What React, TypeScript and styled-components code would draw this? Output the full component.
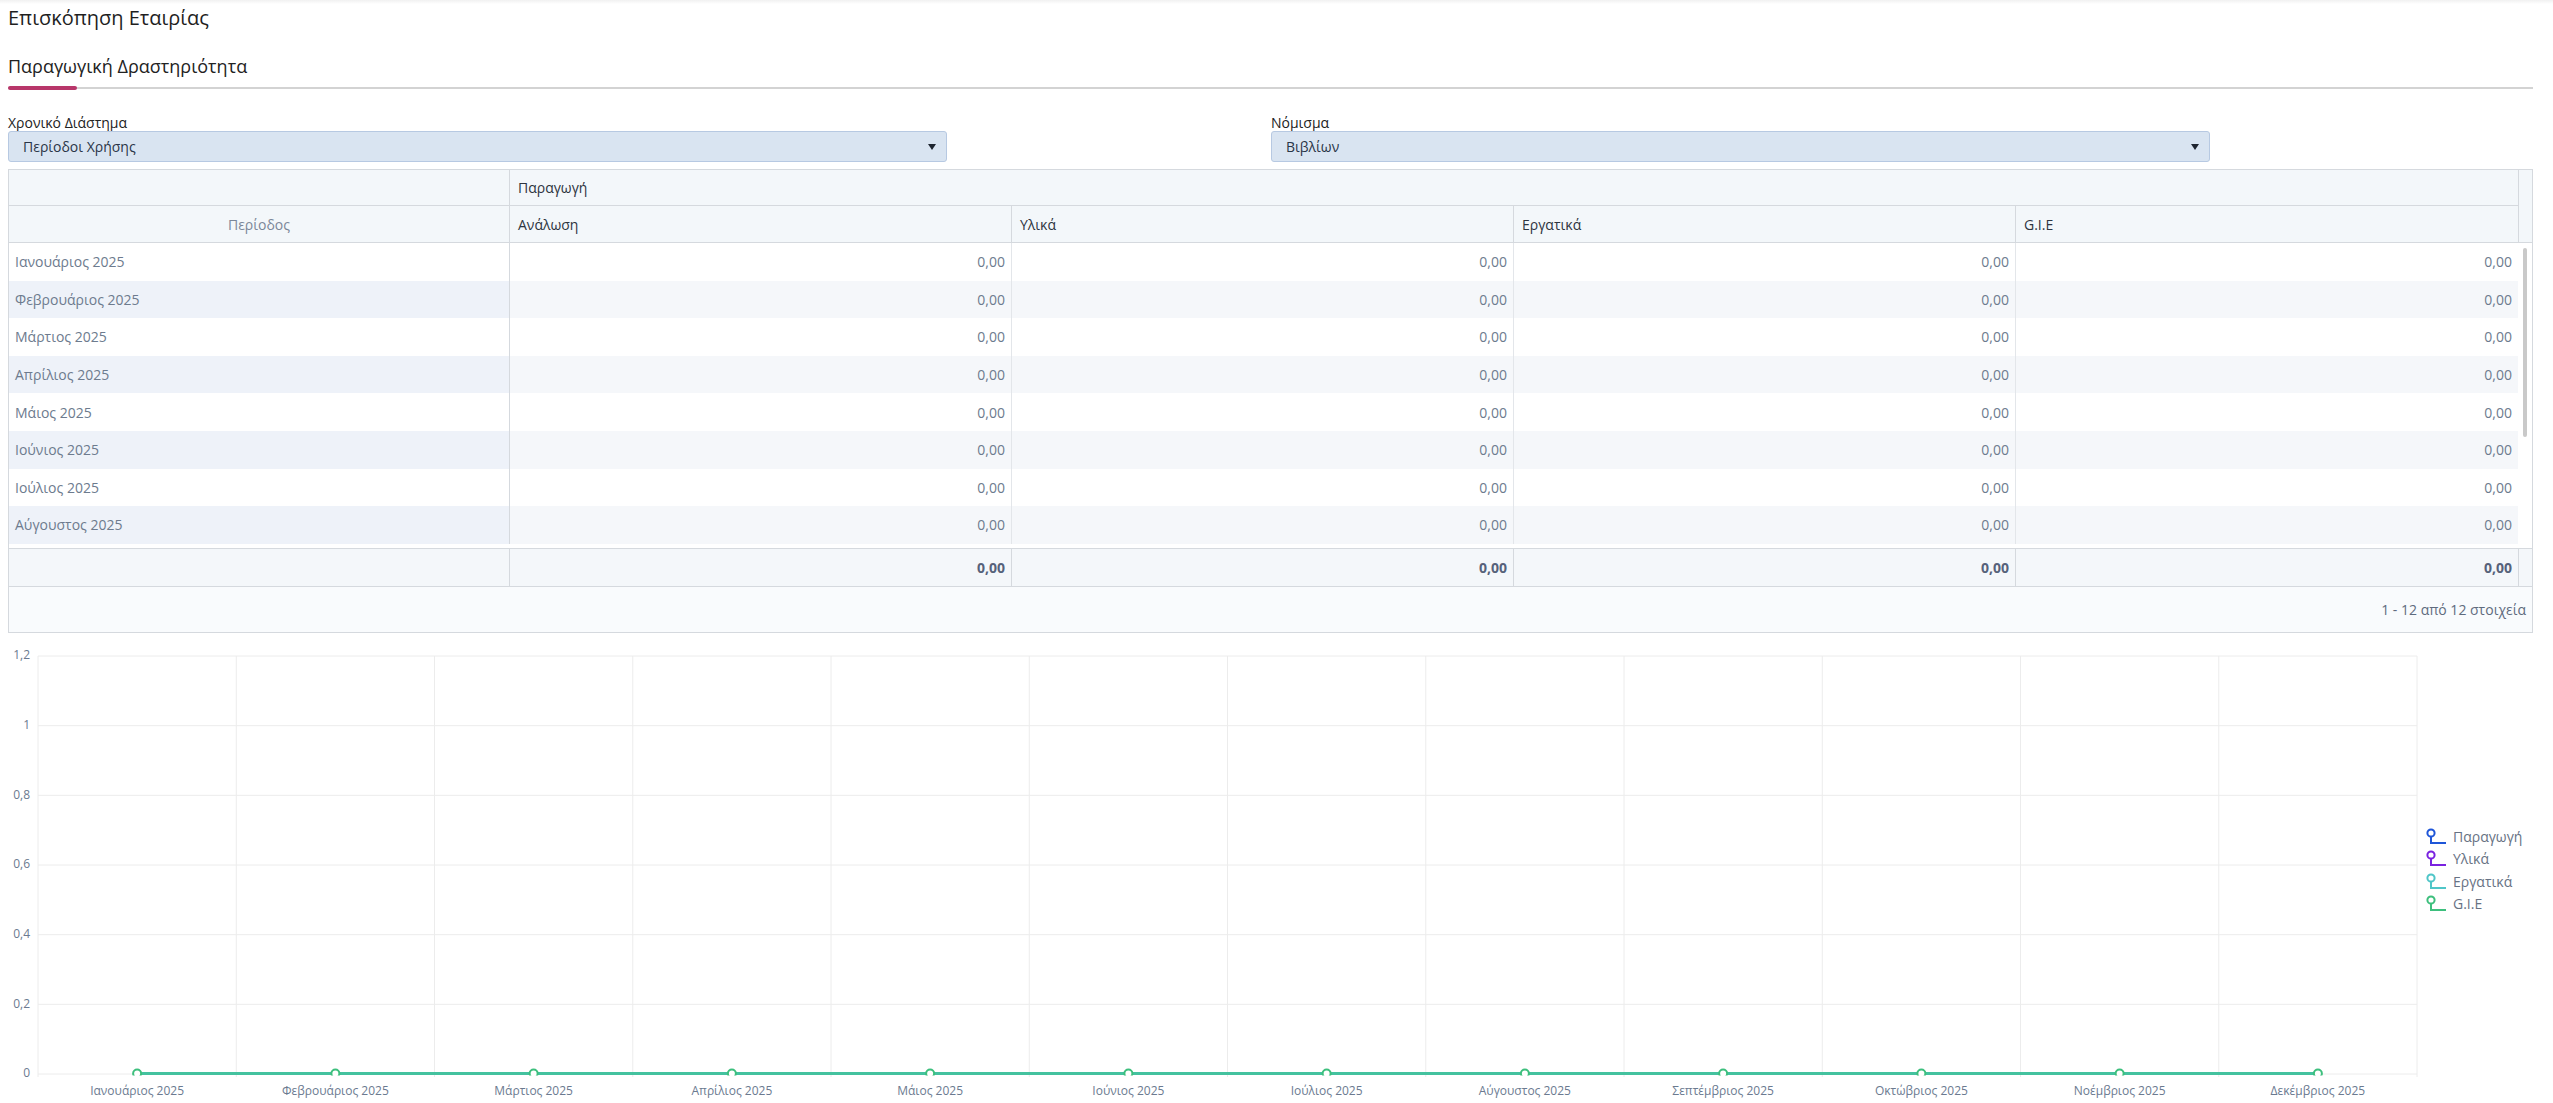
import React from "react";
import styled, { createGlobalStyle } from "styled-components";

const GlobalStyle = createGlobalStyle`
  html, body { margin: 0; padding: 0; background: #fff; }
  body { font-family: "Open Sans", "Noto Sans", "DejaVu Sans", sans-serif; color: #222; }
  * { box-sizing: border-box; }
`;

const months = [
  "Ιανουάριος 2025",
  "Φεβρουάριος 2025",
  "Μάρτιος 2025",
  "Απρίλιος 2025",
  "Μάιος 2025",
  "Ιούνιος 2025",
  "Ιούλιος 2025",
  "Αύγουστος 2025",
  "Σεπτέμβριος 2025",
  "Οκτώβριος 2025",
  "Νοέμβριος 2025",
  "Δεκέμβριος 2025",
];

const visibleRows = months.slice(0, 8);

const series = [
  { name: "Παραγωγή", color: "#1f56d8" },
  { name: "Υλικά", color: "#7a22e0" },
  { name: "Εργατικά", color: "#4fc6c8" },
  { name: "G.I.E", color: "#3dbf7d" },
];

const Page = styled.div`
  padding: 0 20px 0 8px;
  min-height: 1103px;
`;

const TopShade = styled.div`
  height: 4px;
  margin: 0 -20px 0 -8px;
  background: linear-gradient(#f1f1f1, #ffffff);
`;

const Title = styled.h1`
  margin: 0;
  font-size: 20px;
  line-height: 28px;
  font-weight: 400;
  color: #1f1f1f;
`;

const TabBar = styled.div`
  margin-top: 22px;
  border-bottom: 2px solid #d3d3d3;
  display: flex;
`;

const Tab = styled.div`
  position: relative;
  font-size: 18px;
  line-height: 24px;
  padding-bottom: 9px;
  color: #222;
`;

const TabIndicator = styled.span`
  position: absolute;
  left: 0;
  bottom: -3px;
  width: 69px;
  height: 4px;
  border-radius: 2px;
  background: #b8366a;
`;

const Filters = styled.div`
  margin-top: 25px;
  display: grid;
  grid-template-columns: 1263px 1263px;
`;

const Field = styled.div`
  display: flex;
  flex-direction: column;
`;

const Label = styled.label`
  font-size: 14px;
  line-height: 17px;
  color: #222;
`;

const Select = styled.div`
  width: 939px;
  height: 31px;
  display: flex;
  align-items: center;
  justify-content: space-between;
  padding: 0 10px 0 14px;
  background: #d9e4f1;
  border: 1px solid #b7c9e2;
  border-radius: 3px;
  font-size: 14px;
  color: #2a3547;
`;

const Caret = styled.span`
  width: 0;
  height: 0;
  border-left: 4px solid transparent;
  border-right: 4px solid transparent;
  border-top: 6px solid #1e2530;
`;

const Grid = styled.div`
  margin-top: 7px;
  border: 1px solid #d5d9de;
  font-size: 14px;
`;

const cols = "501px repeat(4, 1fr)";

const HeaderGrid = styled.div`
  display: grid;
  grid-template-columns: ${cols} 14px;
  grid-template-rows: 36px 36px;
  background: #f3f7fa;
  border-bottom: 1px solid #d5d9de;
`;

const HeadCell = styled.div<{ $center?: boolean; $muted?: boolean; $right?: boolean; $bottom?: boolean }>`
  display: flex;
  align-items: center;
  justify-content: ${(p) => (p.$center ? "center" : "flex-start")};
  padding: 0 8px;
  color: ${(p) => (p.$muted ? "#7b8799" : "#2d3440")};
  border-right: ${(p) => (p.$right ? "1px solid #d5d9de" : "none")};
  border-bottom: ${(p) => (p.$bottom ? "1px solid #d5d9de" : "none")};
`;

const Gutter = styled.div`
  grid-column: 6;
  grid-row: 1 / 3;
  border-left: 1px solid #d5d9de;
`;

const Body = styled.div`
  height: 305px;
  display: grid;
  grid-template-columns: 1fr 14px;
  background: #fff;
`;

const Rows = styled.div`
  overflow: hidden;
`;

const ScrollTrack = styled.div`
  padding: 5px;
  background: #fff;
`;

const ScrollThumb = styled.div`
  width: 4px;
  height: 189px;
  border-radius: 2px;
  background: #c9c9c9;
`;

const Row = styled.div`
  display: grid;
  grid-template-columns: ${cols};
  height: 37.6px;
`;

const PeriodCell = styled.div<{ $alt: boolean }>`
  display: flex;
  align-items: center;
  padding: 0 6px;
  color: #6d7b8e;
  background: ${(p) => (p.$alt ? "#eef2f9" : "#fff")};
  border-right: 1px solid #d5d9de;
`;

const NumCell = styled.div<{ $alt: boolean; $last?: boolean }>`
  display: flex;
  align-items: center;
  justify-content: flex-end;
  padding: 0 6px;
  color: #6d7b8e;
  background: ${(p) => (p.$alt ? "#f5f7fa" : "#fff")};
  border-right: ${(p) => (p.$last ? "none" : "1px solid #e3e6ea")};
`;

const Footer = styled.div`
  display: grid;
  grid-template-columns: ${cols} 14px;
  height: 39px;
  background: #f4f7fa;
  border-top: 1px solid #d5d9de;
  border-bottom: 1px solid #d5d9de;
`;

const FootCell = styled.div<{ $border?: "right" | "left" | "none" }>`
  display: flex;
  align-items: center;
  justify-content: flex-end;
  padding: 0 6px;
  font-weight: 700;
  color: #56627a;
  border-right: ${(p) => (p.$border === "right" ? "1px solid #d5d9de" : "none")};
  border-left: ${(p) => (p.$border === "left" ? "1px solid #d5d9de" : "none")};
`;

const Pager = styled.div`
  height: 45px;
  display: flex;
  align-items: center;
  justify-content: flex-end;
  padding-right: 6px;
  background: #f9fbfd;
  color: #5f6b7e;
`;

const ChartRow = styled.div`
  display: flex;
  align-items: center;
  gap: 8px;
`;

const ChartSvg = styled.svg`
  display: block;
  flex: none;
`;

const Legend = styled.div`
  display: flex;
  flex-direction: column;
  margin-top: 4px;
`;

const LegendItem = styled.div`
  height: 22.3px;
  display: flex;
  align-items: center;
  gap: 7px;
  font-size: 14px;
  color: #677284;
`;

const LegendIcon = ({ color }: { color: string }) => (
  <svg width="20" height="17" viewBox="0 0 20 17">
    <circle cx="5" cy="5" r="3.6" fill="#fff" stroke={color} strokeWidth="2" />
    <path d="M5 8.6 V15 H20" fill="none" stroke={color} strokeWidth="2" />
  </svg>
);

const W = 2410;
const H = 470;
const PL = 30;
const PR = 2409;
const PT = 23;
const PB = 441;

const Chart = () => {
  const cw = (PR - PL) / 12;
  const yOf = (v: number) => PB - (v / 1.2) * (PB - PT);
  const ticks = [0, 0.2, 0.4, 0.6, 0.8, 1, 1.2];
  const fmt = (v: number) => (Number.isInteger(v) ? String(v) : v.toFixed(1).replace(".", ","));
  const cx = (i: number) => PL + cw * (i + 0.5);
  return (
    <ChartSvg width={W} height={H} viewBox={`0 0 ${W} ${H}`}>
      <defs>
        <clipPath id="plotclip">
          <rect x={PL} y={PT - 6} width={PR - PL} height={PB - PT + 7.5} />
        </clipPath>
      </defs>
      {Array.from({ length: 13 }).map((_, i) => (
        <line key={"v" + i} x1={PL + cw * i} x2={PL + cw * i} y1={PT} y2={PB + 3} stroke="#ececec" strokeWidth="1" />
      ))}
      {ticks.map((t) => (
        <g key={"h" + t}>
          <line x1={PL} x2={PR} y1={yOf(t)} y2={yOf(t)} stroke="#ececec" strokeWidth="1" />
          <text
            x={22}
            y={yOf(t)}
            textAnchor="end"
            dominantBaseline="middle"
            fontSize="12"
            fontFamily="'Open Sans', sans-serif"
            fill="#6b7a90"
          >
            {fmt(t)}
          </text>
        </g>
      ))}
      <g clipPath="url(#plotclip)">
        {series.map((s, si) => (
          <polyline
            key={s.name}
            points={months.map((_, i) => `${cx(i)},${PB - 0.5}`).join(" ")}
            fill="none"
            stroke={s.color}
            strokeWidth="3"
            opacity={si === 3 ? 0.55 : 1}
          />
        ))}
        {months.map((_, i) => (
          <circle key={"m" + i} cx={cx(i)} cy={PB - 0.5} r="4" fill="#fff" stroke="#3dbf7d" strokeWidth="2" />
        ))}
      </g>
      {months.map((m, i) => (
        <text
          key={"x" + i}
          x={cx(i)}
          y={459}
          textAnchor="middle"
          dominantBaseline="middle"
          fontSize="12"
          fontFamily="'Open Sans', sans-serif"
          fill="#6b7a90"
        >
          {m}
        </text>
      ))}
    </ChartSvg>
  );
};

export default function App() {
  return (
    <>
      <GlobalStyle />
      <Page>
        <TopShade />
        <Title>Επισκόπηση Εταιρίας</Title>
        <TabBar>
          <Tab>
            Παραγωγική Δραστηριότητα
            <TabIndicator />
          </Tab>
        </TabBar>
        <Filters>
          <Field>
            <Label>Χρονικό Διάστημα</Label>
            <Select>
              <span>Περίοδοι Χρήσης</span>
              <Caret />
            </Select>
          </Field>
          <Field>
            <Label>Νόμισμα</Label>
            <Select>
              <span>Βιβλίων</span>
              <Caret />
            </Select>
          </Field>
        </Filters>
        <Grid>
          <HeaderGrid>
            <HeadCell $right $bottom style={{ gridColumn: 1, gridRow: 1 }} />
            <HeadCell $bottom style={{ gridColumn: "2 / 6", gridRow: 1 }}>
              Παραγωγή
            </HeadCell>
            <Gutter />
            <HeadCell $center $muted $right>
              Περίοδος
            </HeadCell>
            <HeadCell $right>Ανάλωση</HeadCell>
            <HeadCell $right>Υλικά</HeadCell>
            <HeadCell $right>Εργατικά</HeadCell>
            <HeadCell>G.I.E</HeadCell>
          </HeaderGrid>
          <Body>
            <Rows>
              {visibleRows.map((m, i) => (
                <Row key={m}>
                  <PeriodCell $alt={i % 2 === 1}>{m}</PeriodCell>
                  <NumCell $alt={i % 2 === 1}>0,00</NumCell>
                  <NumCell $alt={i % 2 === 1}>0,00</NumCell>
                  <NumCell $alt={i % 2 === 1}>0,00</NumCell>
                  <NumCell $alt={i % 2 === 1} $last>
                    0,00
                  </NumCell>
                </Row>
              ))}
            </Rows>
            <ScrollTrack>
              <ScrollThumb />
            </ScrollTrack>
          </Body>
          <Footer>
            <FootCell $border="right" />
            <FootCell $border="right">0,00</FootCell>
            <FootCell $border="right">0,00</FootCell>
            <FootCell $border="right">0,00</FootCell>
            <FootCell>0,00</FootCell>
            <FootCell $border="left" />
          </Footer>
          <Pager>1 - 12 από 12 στοιχεία</Pager>
        </Grid>
        <ChartRow>
          <Chart />
          <Legend>
            {series.map((s) => (
              <LegendItem key={s.name}>
                <LegendIcon color={s.color} />
                <span>{s.name}</span>
              </LegendItem>
            ))}
          </Legend>
        </ChartRow>
      </Page>
    </>
  );
}
